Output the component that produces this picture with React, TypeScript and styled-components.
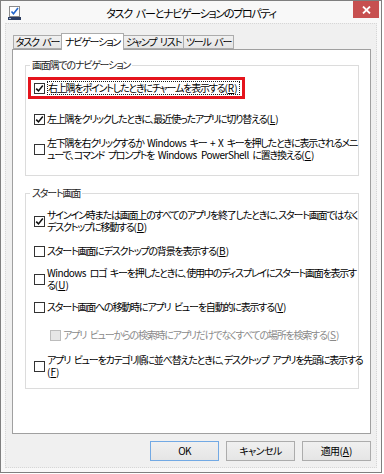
import React from 'react'
import styled, { createGlobalStyle } from 'styled-components'

const GlobalStyle = createGlobalStyle`
  html, body {
    margin: 0;
    padding: 0;
    background: #ffffff;
  }
  body {
    font-family: "Noto Sans CJK JP", "Noto Sans", sans-serif;
    font-size: 10px;
    color: #000;
    font-feature-settings: "palt";
    letter-spacing: -1.2px;
    word-spacing: 2.5px;
  }
`

const Window = styled.div`
  width: 382px;
  height: 473px;
  box-sizing: border-box;
  border: 1px solid #7f7f7f;
  background: #f8f8f8;
  display: flex;
  flex-direction: column;
`

const TitleBar = styled.div`
  height: 22px;
  display: grid;
  grid-template-columns: 1fr auto 1fr;
  align-items: start;
`

const AppIcon = styled.svg`
  margin: 5px 0 0 7px;
`

const Title = styled.div`
  font-size: 11px;
  letter-spacing: -1.3px;
  word-spacing: 3px;
  line-height: 25px;
  color: #000;
  white-space: nowrap;
`

const CloseButton = styled.div`
  justify-self: end;
  width: 26px;
  height: 17px;
  margin-right: 2px;
  background: #c75050;
  display: flex;
  align-items: center;
  justify-content: center;
`

const Client = styled.div`
  flex: 1;
  margin: 0 4px 4px 4px;
  border: 1px dotted #d6d6d6;
  background: #f0f0f0;
  padding: 9px 5px 6px 6px;
  display: flex;
  flex-direction: column;
  min-height: 0;
`

const TabRow = styled.div`
  display: flex;
  align-items: flex-end;
  padding-left: 1px;
  margin-bottom: -1px;
  position: relative;
  z-index: 1;
`

const Tab = styled.div<{ $active?: boolean; $w: number }>`
  box-sizing: border-box;
  width: ${p => p.$w}px;
  height: ${p => (p.$active ? '17px' : '14px')};
  margin-bottom: ${p => (p.$active ? '0' : '1px')};
  border: 1px solid #acacac;
  border-bottom: ${p => (p.$active ? 'none' : '1px solid #acacac')};
  background: ${p => (p.$active ? '#ffffff' : 'linear-gradient(#f0f0f0, #e5e5e5)')};
  line-height: ${p => (p.$active ? '15px' : '12px')};
  text-align: center;
  white-space: nowrap;
  & + & {
    margin-left: -1px;
  }
`

const Panel = styled.div`
  flex: 1;
  background: #ffffff;
  border: 1px solid #a0a0a0;
  padding: 9px 11px 0 12px;
  position: relative;
  z-index: 0;
`

const Group = styled.fieldset<{ $top?: number; $bottom: number }>`
  margin: ${p => p.$top ?? 0}px 0 0 0;
  padding: 0 8px ${p => p.$bottom}px 8px;
  border: 1px solid #dcdcdc;
  min-width: 0;
`

const Legend = styled.legend`
  margin-left: -4px;
  padding: 0 2px;
  line-height: 12px;
  color: #1e1e1e;
`

const Item = styled.div<{ $gap: number; $indent?: number }>`
  display: flex;
  align-items: center;
  margin-top: ${p => p.$gap}px;
  margin-left: ${p => p.$indent ?? 0}px;
`

const Highlight = styled.div`
  display: flex;
  align-items: center;
  width: fit-content;
  margin: 6px 0 0 -6px;
  padding: 1px 2px 1px 3px;
  border: 3px solid #e5141c;
`

const Box = styled.span<{ $disabled?: boolean }>`
  box-sizing: border-box;
  flex: none;
  width: 11px;
  height: 11px;
  border: 1px solid ${p => (p.$disabled ? '#bcbcbc' : '#333333')};
  background: ${p => (p.$disabled ? '#e6e6e6' : '#ffffff')};
  margin-right: 2px;
  display: flex;
  align-items: center;
  justify-content: center;
`

const Label = styled.span<{ $disabled?: boolean; $focus?: boolean }>`
  line-height: 12px;
  white-space: nowrap;
  color: ${p => (p.$disabled ? '#8a8a8a' : '#000')};
  border: ${p => (p.$focus ? '1px dotted #1a1a1a' : 'none')};
  padding-right: ${p => (p.$focus ? '1px' : '0')};
`

const Latin = styled.span`
  letter-spacing: -0.5px;
`

const Access = styled.span`
  letter-spacing: 0;
  & u {
    text-underline-offset: 1px;
  }
`

const ButtonRow = styled.div`
  display: flex;
  justify-content: flex-end;
  gap: 7px;
  margin-top: 7px;
`

const Button = styled.div<{ $default?: boolean }>`
  box-sizing: border-box;
  width: 69px;
  height: 20px;
  border: 1px solid ${p => (p.$default ? '#72a9e4' : '#acacac')};
  background: linear-gradient(#f0f0f0, #e5e5e5);
  display: flex;
  align-items: center;
  justify-content: center;
  line-height: 12px;
  letter-spacing: -0.6px;
`

const Key: React.FC<{ k: string }> = ({ k }) => (
  <Access>
    (<u>{k}</u>)
  </Access>
)

const Check = () => (
  <svg width="9" height="9" viewBox="0 0 9 9">
    <path d="M1.2 4.6 L3.5 6.9 L7.8 1.6" fill="none" stroke="#111" strokeWidth="1.6" />
  </svg>
)

type CheckItemProps = {
  checked?: boolean
  disabled?: boolean
  focus?: boolean
  children: React.ReactNode
}

const CheckItem: React.FC<CheckItemProps> = ({ checked, disabled, focus, children }) => (
  <>
    <Box $disabled={disabled}>{checked && <Check />}</Box>
    <Label $disabled={disabled} $focus={focus}>
      {children}
    </Label>
  </>
)

export default function App() {
  return (
    <>
      <GlobalStyle />
      <Window>
        <TitleBar>
          <AppIcon width="14" height="14" viewBox="0 0 14 14">
            <rect x="1.5" y="0.5" width="10" height="10" fill="#fff" stroke="#8a8a8a" />
            <path d="M3.5 5.5 L5.5 7.8 L10 2" fill="none" stroke="#2266cc" strokeWidth="1.6" />
            <rect x="0" y="11" width="13" height="3" fill="#2c3e63" />
            <rect x="1" y="12" width="2" height="1" fill="#9fb6d8" />
          </AppIcon>
          <Title>タスク バーとナビゲーションのプロパティ</Title>
          <CloseButton>
            <svg width="9" height="8" viewBox="0 0 9 8">
              <path d="M1 0.5 L8 7.5 M8 0.5 L1 7.5" stroke="#fff" strokeWidth="1.8" />
            </svg>
          </CloseButton>
        </TitleBar>
        <Client>
          <TabRow>
            <Tab $w={49}>タスク バー</Tab>
            <Tab $active $w={63}>ナビゲーション</Tab>
            <Tab $w={61}>ジャンプ リスト</Tab>
            <Tab $w={51}>ツール バー</Tab>
          </TabRow>
          <Panel>
            <Group $bottom={14}>
              <Legend>画面隅でのナビゲーション</Legend>
              <Highlight>
                <CheckItem checked focus>
                  右上隅をポイントしたときにチャームを表示する<Key k="R" />
                </CheckItem>
              </Highlight>
              <Item $gap={14}>
                <CheckItem checked>
                  左上隅をクリックしたときに、最近使ったアプリに切り替える<Key k="L" />
                </CheckItem>
              </Item>
              <Item $gap={12}>
                <CheckItem>
                  左下隅を右クリックするか <Latin>Windows</Latin> キー + <Latin>X</Latin>{' '}
                  キーを押したときに表示されるメニ
                  <br />
                  ューで、コマンド プロンプトを <Latin>Windows PowerShell</Latin> に置き換える
                  <Key k="C" />
                </CheckItem>
              </Item>
            </Group>
            <Group $top={11} $bottom={10}>
              <Legend>スタート画面</Legend>
              <Item $gap={10}>
                <CheckItem checked>
                  サインイン時または画面上のすべてのアプリを終了したときに、スタート画面ではなく
                  <br />
                  デスクトップに移動する<Key k="D" />
                </CheckItem>
              </Item>
              <Item $gap={12}>
                <CheckItem>
                  スタート画面にデスクトップの背景を表示する<Key k="B" />
                </CheckItem>
              </Item>
              <Item $gap={10}>
                <CheckItem>
                  <Latin>Windows</Latin> ロゴ キーを押したときに、使用中のディスプレイにスタート画面を表示す
                  <br />
                  る<Key k="U" />
                </CheckItem>
              </Item>
              <Item $gap={10}>
                <CheckItem>
                  スタート画面への移動時にアプリ ビューを自動的に表示する<Key k="V" />
                </CheckItem>
              </Item>
              <Item $gap={16} $indent={16}>
                <CheckItem disabled>
                  アプリ ビューからの検索時にアプリだけでなくすべての場所を検索する<Key k="S" />
                </CheckItem>
              </Item>
              <Item $gap={13}>
                <CheckItem>
                  アプリ ビューをカテゴリ順に並べ替えたときに、デスクトップ アプリを先頭に表示する
                  <br />
                  <Key k="F" />
                </CheckItem>
              </Item>
            </Group>
          </Panel>
          <ButtonRow>
            <Button $default>OK</Button>
            <Button>キャンセル</Button>
            <Button>
              適用<Key k="A" />
            </Button>
          </ButtonRow>
        </Client>
      </Window>
    </>
  )
}
